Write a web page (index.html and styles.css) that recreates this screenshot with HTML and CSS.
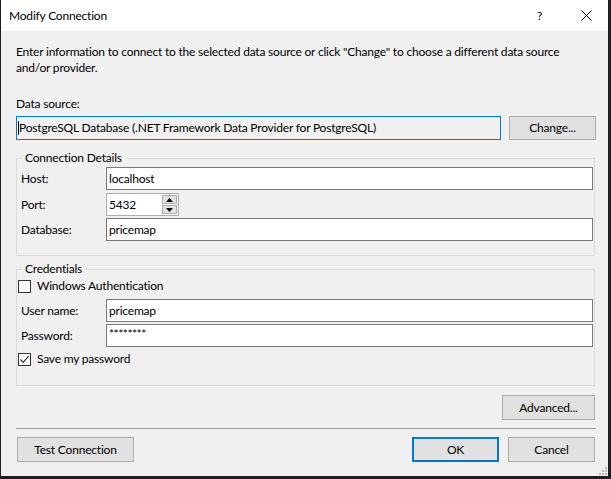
FILE: index.html
```html
<!DOCTYPE html>
<html>
<head>
<meta charset="utf-8">
<link rel="stylesheet" href="styles.css">
</head>
<body>
<div class="dialog">
  <div class="titlebar">
    <span class="title">Modify Connection</span>
    <span class="help">?</span>
    <span class="close"><svg width="11" height="11" viewBox="0 0 11 11"><path d="M0.5 0.5 L10.5 10.5 M10.5 0.5 L0.5 10.5" stroke="#000" stroke-width="1" fill="none"/></svg></span>
  </div>
  <div class="content">
    <p class="intro">Enter information to connect to the selected data source or click "Change" to choose a different data source and/or provider.</p>
    <div class="ds-label">Data source:</div>
    <div class="ds-row">
      <div class="ds-box"><span class="caret"></span>PostgreSQL Database (.NET Framework Data Provider for PostgreSQL)</div>
      <div class="btn btn-change">Change...</div>
    </div>
    <fieldset class="group group-conn">
      <legend>Connection Details</legend>
      <div class="row row-host"><span class="lbl">Host:</span><div class="input">localhost</div></div>
      <div class="row row-port"><span class="lbl">Port:</span>
        <div class="input port">5432
          <span class="spin"><span class="spin-btn"><svg width="7" height="4" viewBox="0 0 7 4"><path d="M3.5 0 L7 4 L0 4 Z" fill="#000"/></svg></span><span class="spin-btn"><svg width="7" height="4" viewBox="0 0 7 4"><path d="M0 0 L7 0 L3.5 4 Z" fill="#000"/></svg></span></span>
        </div>
      </div>
      <div class="row row-db"><span class="lbl">Database:</span><div class="input">pricemap</div></div>
    </fieldset>
    <fieldset class="group group-cred">
      <legend>Credentials</legend>
      <div class="check row-winauth"><span class="box"></span><span>Windows Authentication</span></div>
      <div class="row row-user"><span class="lbl">User name:</span><div class="input">pricemap</div></div>
      <div class="row row-pass"><span class="lbl">Password:</span><div class="input pass">********</div></div>
      <div class="check row-save"><span class="box"><svg width="11" height="11" viewBox="0 0 11 11"><path d="M1.5 5.5 L4.2 8.3 L9.6 2.2" stroke="#333" stroke-width="1.2" fill="none"/></svg></span><span>Save my password</span></div>
    </fieldset>
    <div class="adv-row"><div class="btn btn-adv">Advanced...</div></div>
    <div class="sep"></div>
    <div class="footer">
      <div class="btn btn-test">Test Connection</div>
      <div class="spacer"></div>
      <div class="btn btn-ok">OK</div>
      <div class="btn btn-cancel">Cancel</div>
    </div>
  </div>
  <svg class="grip" width="9" height="9" viewBox="0 0 9 9">
    <rect x="7" y="1" width="2" height="2" fill="#b8b8b8"/>
    <rect x="4" y="4" width="2" height="2" fill="#b8b8b8"/>
    <rect x="7" y="4" width="2" height="2" fill="#b8b8b8"/>
    <rect x="1" y="7" width="2" height="2" fill="#b8b8b8"/>
    <rect x="4" y="7" width="2" height="2" fill="#b8b8b8"/>
    <rect x="7" y="7" width="2" height="2" fill="#b8b8b8"/>
  </svg>
</div>
</body>
</html>
```
FILE: styles.css
```css
html, body {
  margin: 0;
  padding: 0;
  background: #1e1e1e;
  width: 611px;
  height: 479px;
  overflow: hidden;
}
body {
  font-family: "Lato", "Noto Sans", sans-serif;
  font-size: 12px;
  line-height: 16px;
  letter-spacing: -0.2px;
  color: #000;
}
.dialog {
  position: relative;
  margin-left: 1px;
  width: 607px;
  height: 476px;
  background: #f0f0f0;
}
.titlebar {
  height: 31px;
  background: #fff;
  display: flex;
  align-items: center;
}
.title {
  margin-left: 8px;
  flex: 1;
}
.help {
  width: 10px;
  margin-right: 34px;
}
.close {
  display: flex;
  margin-right: 16px;
}
.content {
  padding: 0 12px 0 15px;
}
.intro {
  margin: 13px 0 0 0;
  width: 548px;
}
.ds-label {
  margin-top: 20px;
}
.ds-row {
  display: flex;
  margin-top: 4px;
  gap: 8px;
}
.ds-box {
  width: 483px;
  height: 22px;
  border: 1px solid #0078d7;
  display: flex;
  align-items: center;
  padding-left: 1px;
  white-space: nowrap;
  overflow: hidden;
}
.caret {
  width: 1px;
  height: 14px;
  background: #000;
}
.btn {
  box-sizing: border-box;
  height: 25px;
  border: 1px solid #adadad;
  background: #e1e1e1;
  display: flex;
  align-items: center;
  justify-content: center;
}
.btn-change {
  width: 87px;
  height: 24px;
}
.group {
  margin: 0;
  border: 1px solid #dcdcdc;
  box-sizing: border-box;
  width: 579px;
  padding: 0 1px 0 4px;
}
.group legend {
  padding: 0 3px;
  margin-left: 1px;
  line-height: 16px;
}
.group-conn {
  margin-top: 10px;
  padding-bottom: 14px;
}
.group-cred {
  margin-top: 5px;
  padding-bottom: 18px;
}
.row {
  display: flex;
  align-items: center;
}
.lbl {
  width: 85px;
  flex: none;
}
.input {
  box-sizing: border-box;
  flex: 1;
  height: 23px;
  border: 1px solid #7a7a7a;
  background: #fff;
  padding-left: 2px;
  display: flex;
  align-items: center;
}
.row-host { margin-top: 1px; }
.row-port { margin-top: 3px; }
.row-db { margin-top: 2px; }
.input.port {
  flex: none;
  width: 73px;
  position: relative;
  border-color: #adadad;
}
.spin {
  position: absolute;
  right: 1px;
  top: 1px;
  display: flex;
  flex-direction: column;
  gap: 1px;
}
.spin-btn {
  width: 15px;
  height: 9px;
  box-sizing: border-box;
  border: 1px solid #adadad;
  background: #e1e1e1;
  display: flex;
  align-items: center;
  justify-content: center;
}
.check {
  display: flex;
  align-items: center;
  margin-left: -3px;
}
.check .box {
  box-sizing: border-box;
  width: 13px;
  height: 13px;
  border: 1px solid #333;
  background: #fff;
  margin-right: 6px;
  display: flex;
  align-items: center;
  justify-content: center;
}
.row-winauth { margin-top: 1px; }
.row-user { margin-top: 5px; }
.row-pass { margin-top: 2px; }
.input.pass {
  align-items: flex-start;
  padding-top: 1px;
  letter-spacing: -0.5px;
}
.row-save { margin-top: 4px; }
.adv-row {
  display: flex;
  justify-content: flex-end;
  margin-top: 9px;
  width: 579px;
}
.btn-adv {
  width: 93px;
}
.sep {
  margin-top: 8px;
  height: 1px;
  width: 580px;
  background: #a0a0a0;
}
.footer {
  display: flex;
  margin-top: 8px;
  width: 579px;
  padding-left: 1px;
  box-sizing: border-box;
}
.spacer { flex: 1; }
.btn-test { width: 117px; }
.btn-ok {
  width: 87px;
  border: 2px solid #0078d7;
  margin-right: 9px;
}
.btn-cancel { width: 87px; }
.grip {
  position: absolute;
  right: 1px;
  bottom: 1px;
}
```
